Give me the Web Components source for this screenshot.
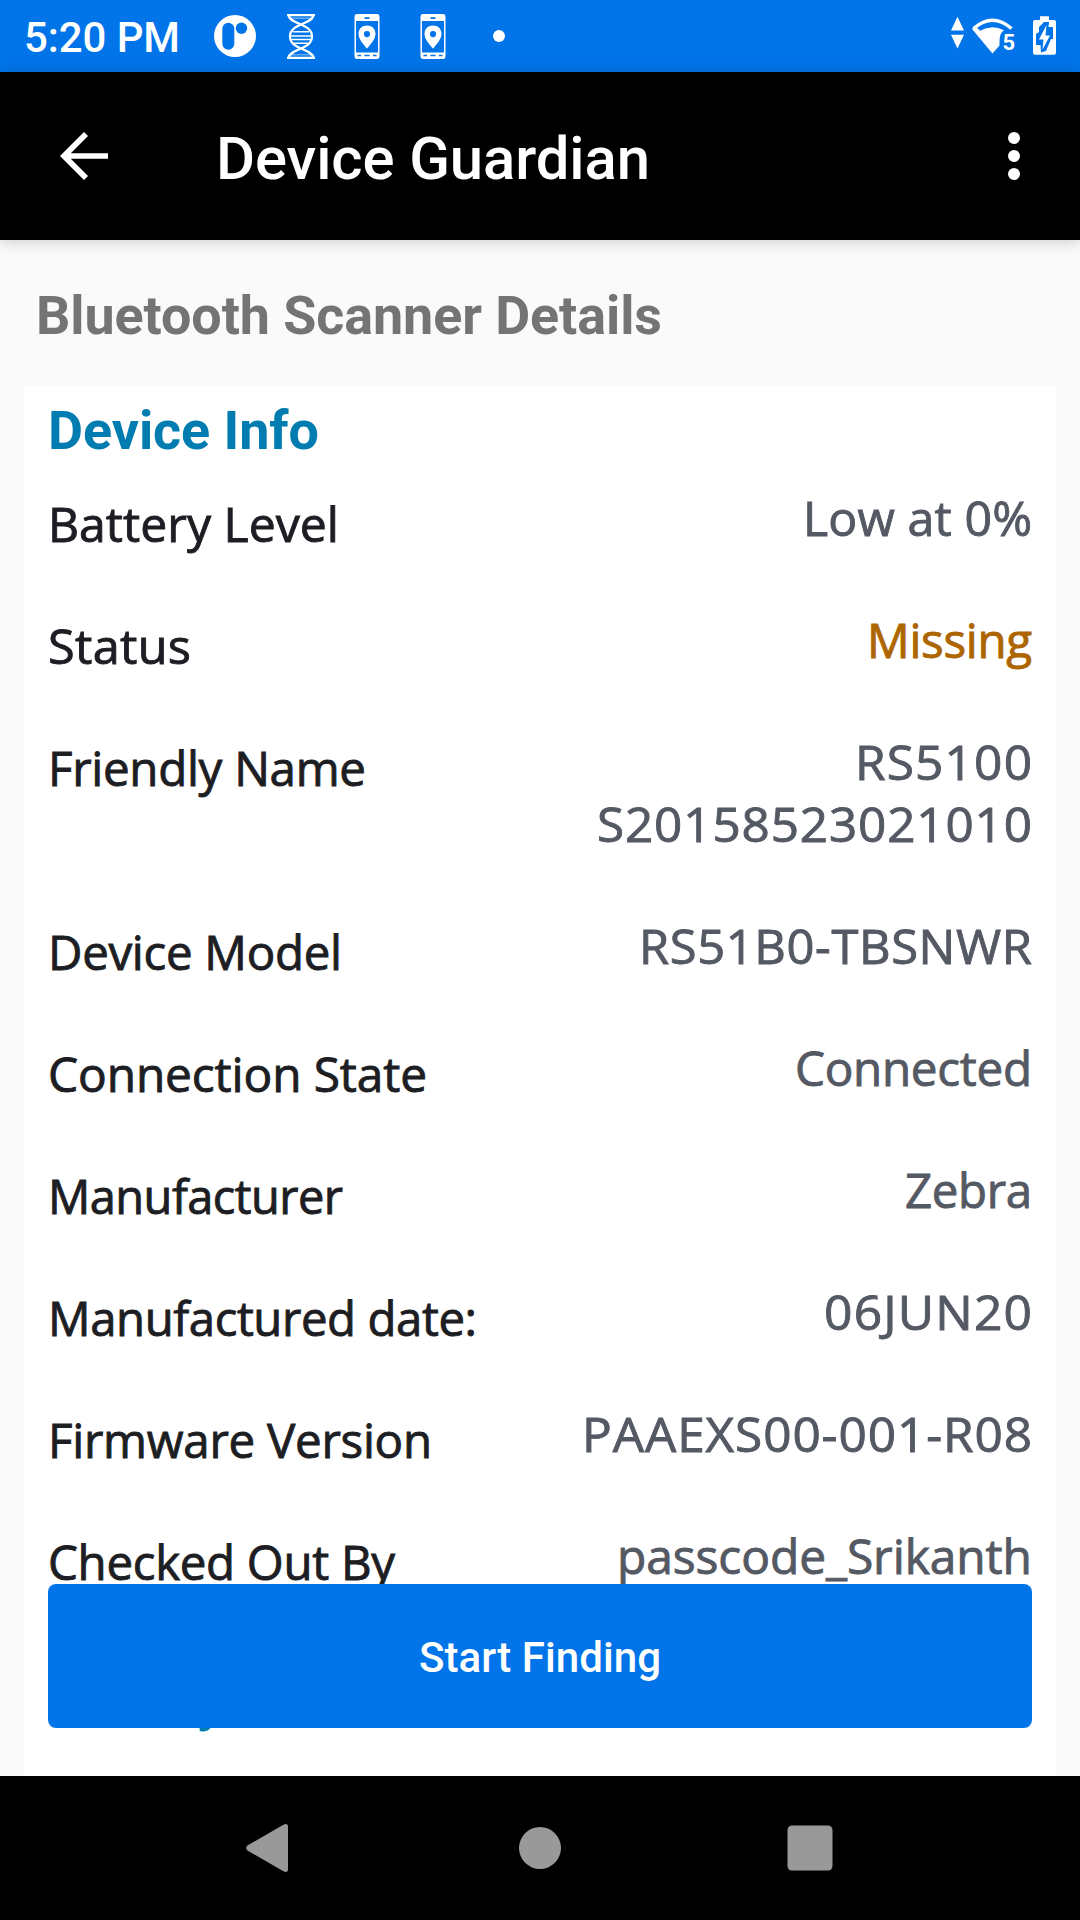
<!DOCTYPE html>
<html lang="en">
<head>
<meta charset="utf-8">
<title>Device Guardian</title>
<style>
html,body{margin:0;padding:0;width:1080px;height:1920px;overflow:hidden;background:#fafafa}
</style>
</head>
<body>
<guardian-screen></guardian-screen>
<script>
const define = (name, html, init) => customElements.define(name, class extends HTMLElement {
  constructor() {
    super();
    this.attachShadow({ mode: 'open' }).innerHTML = html;
  }
  connectedCallback() { if (init) init.call(this, this.shadowRoot); }
});

// Text run that takes exactly `w` pixels: part glyph stretch, part tracking.
define('fit-text', `<style>:host{display:block;flex:none;white-space:pre}span{display:inline-block;transform-origin:0 50%}</style><span></span>`, function (root) {
  const span = root.querySelector('span');
  const text = this.getAttribute('text');
  const w = +this.getAttribute('w');
  span.textContent = text;
  const own = span.getBoundingClientRect().width;
  const stretch = Math.sqrt(w / own);
  this.style.width = w + 'px';
  span.style.letterSpacing = (w / stretch - own) / (text.length - 1) + 'px';
  span.style.transform = `scaleX(${stretch})`;
});

define('phone-pin-icon', `<style>:host{display:block;width:26px;height:45px}svg{display:block}</style>
<svg width="26" height="45" viewBox="0 0 26 45"><path fill="#fff" fill-rule="evenodd" d="M3 0H23Q25.500 0 25.500 3V42Q25.500 45 23 45H3Q.500 45 .500 42V3Q.500 0 3 0ZM2 7V38.500H24V7ZM10.500 3.300V5H15.500V3.300ZM3.500 40.800V42.300H7V40.800ZM10.500 40.800V42.300H15.500V40.800ZM19 40.800V42.300H22.500V40.800Z"/><path fill="#fff" fill-rule="evenodd" d="M13 11.500C8 11.500 4.500 15 4.500 19.700C4.500 25.500 10 31 13 34.500C16 31 21.500 25.500 21.500 19.700C21.500 15 18 11.500 13 11.500ZM13 17A3.100 3.100 0 1 1 13 23.200A3.100 3.100 0 1 1 13 17Z"/></svg>`);

define('status-bar', `<style>
:host{display:flex;height:72px;background:#0074e8;color:#fff;align-items:center;padding:0 24px;font:500 42px/72px Roboto,sans-serif}
svg{display:block;flex:none}
fit-text{margin-top:3px}
.a{margin-left:34px}.b{margin-left:31px}.c{margin-left:39px}.d{margin-left:40px}.e{margin-left:47px}
.r{margin-left:auto;display:flex;align-items:center}
</style>
<fit-text text="5:20 PM" w="156"></fit-text>
<svg class="a" width="42" height="42" viewBox="0 0 42 42"><circle cx="21" cy="21" r="21" fill="#fff"/><rect x="8.300" y="7.700" width="12" height="27" rx="6" fill="#0074e8"/><circle cx="27.500" cy="13.300" r="5.700" fill="#0074e8"/></svg>
<svg class="b" width="28" height="45" viewBox="0 0 28 45" fill="none" stroke="#fff" stroke-width="2.200"><path d="M0 1.200H28M0 43.800H28M1.500 1C3 11 25 9 25 22.500S3 34 1.500 44M26.500 1C25 11 3 9 3 22.500S25 34 26.500 44"/><path stroke-width="1" stroke-opacity=".6" d="M3.500 4.200H24.500M4 40.800H24"/><path stroke-width="1.600" d="M6 17.800H22M4 22H24M4 25.500H24M6 29.300H22"/></svg>
<phone-pin-icon class="c"></phone-pin-icon><phone-pin-icon class="d"></phone-pin-icon>
<svg class="e" width="12" height="12"><circle cx="6" cy="6" r="6" fill="#fff"/></svg>
<div class="r">
<svg width="108" height="44" viewBox="948 14 108 44"><path fill="#fff" d="M957.500 16.800L964 30.500H951ZM951 34.700H964L957.500 48.500Z"/>
<path d="M973.500 28.500Q992.500 12 1011.500 28.500" fill="none" stroke="#fff" stroke-width="3.300"/>
<path fill="#fff" d="M972 29L975.500 26L980 30.800Q992 24 1004 30.300Q999.500 33 999.500 41V45.500L992.500 53.500Z"/>
<text x="1002.500" y="49.500" font-family="Roboto,sans-serif" font-size="22" font-weight="700" fill="#fff">5</text>
<path fill="#fff" d="M1040 16.200H1049V20H1054Q1056 20 1056 22V52.500Q1056 54.700 1054 54.700H1035Q1033 54.700 1033 52.500V22Q1033 20 1035 20H1040Z"/>
<path fill="#0074e8" d="M1044 22H1049L1048.500 27L1053 27V39H1051L1046 51L1041 52.500L1040.500 45H1036V34L1039 32V27Z"/><path fill="#fff" d="M1046.500 25L1039 39.500H1043.500L1042.500 49.500L1050 35.500H1045.500Z"/></svg>
</div>`);

define('app-bar', `<style>
:host{display:flex;position:relative;height:168px;box-sizing:border-box;background:#000;color:#fff;align-items:center;padding:0 60px;box-shadow:0 2px 14px rgba(0,0,0,.18);font:500 60px/72px Roboto,sans-serif}
svg{display:block;flex:none}fit-text{margin-left:108px;margin-top:6px}.more{margin-left:auto}
</style>
<svg width="48" height="48" viewBox="0 0 48 48" fill="none" stroke="#fff" stroke-width="5.700"><path d="M48 24H5M26 2L4 24L26 46"/></svg>
<fit-text text="Device Guardian" w="434"></fit-text>
<svg class="more" width="12" height="48" fill="#fff"><circle cx="6" cy="6" r="6"/><circle cx="6" cy="24" r="6"/><circle cx="6" cy="42" r="6"/></svg>`);

define('section-title', `<style>:host{display:block;font:700 54px/64px Roboto,sans-serif}</style><slot></slot>`);

define('info-row', `<style>
:host{display:flex;justify-content:space-between;padding-bottom:60px;font:400 48px/62px "Open Sans","Noto Sans",sans-serif;-webkit-text-stroke:.9px currentColor}
.l{padding-top:6px;height:56px;color:#1d1e23}.v{display:flex;flex-direction:column;align-items:flex-end;color:#545963}
:host([tone=warn]) .v{color:#ad6500}
</style><div class="l"></div><div class="v"></div>`, function (root) {
  const make = s => { const [t, w] = s.split('|'); const f = document.createElement('fit-text'); f.setAttribute('text', t); f.setAttribute('w', w); return f; };
  root.querySelector('.l').append(make(this.getAttribute('label')));
  this.getAttribute('value').split(';').forEach(s => root.querySelector('.v').append(make(s)));
});

define('action-button', `<style>:host{display:flex;justify-content:center;align-items:center;height:144px;box-sizing:border-box;padding-top:3px;border-radius:8px;background:#0074e8;color:#fff;font:500 42px/50px Roboto,sans-serif}</style><fit-text text="Start Finding" w="242"></fit-text>`);

define('nav-bar', `<style>:host{display:flex;height:144px;background:#000;align-items:center;padding-left:246px}svg{display:block}.h{margin:0 226px 0 231px}</style>
<svg width="42" height="48"><path fill="#999" d="M1.500 21.500L37 1Q42 -1.500 42 3V45Q42 49.500 37 47L1.500 26.500Q-1 24 1.500 21.500Z"/></svg>
<svg class="h" width="42" height="42"><circle cx="21" cy="21" r="21" fill="#999"/></svg>
<svg width="46" height="46"><rect x=".500" y=".500" width="45" height="45" rx="4.500" fill="#999"/></svg>`);

define('guardian-screen', `<style>
:host{display:flex;flex-direction:column;width:1080px;height:1920px;background:#fafafa}
main{flex:1;min-height:0;display:flex;flex-direction:column;position:relative;overflow:hidden;padding:0 24px}
app-bar{z-index:1}
.head{padding:44px 12px 0;color:#747474;height:101px}
.card{background:#fff;flex:1;min-height:0;padding:14px 24px 0}
.card section-title{color:#007cb0}
.rows{padding-top:24px}
.history{margin-top:23px}
action-button{position:absolute;left:48px;right:48px;bottom:48px}
</style>
<status-bar></status-bar><app-bar></app-bar>
<main>
<section-title class="head"><fit-text text="Bluetooth Scanner Details" w="626"></fit-text></section-title>
<div class="card">
<section-title><fit-text text="Device Info" w="271"></fit-text></section-title>
<div class="rows">
<info-row label="Battery Level|291" value="Low at 0%|229"></info-row>
<info-row label="Status|143" value="Missing|165" tone="warn"></info-row>
<info-row label="Friendly Name|318" value="RS5100|177;S20158523021010|435"></info-row>
<info-row label="Device Model|294" value="RS51B0-TBSNWR|393"></info-row>
<info-row label="Connection State|379" value="Connected|237"></info-row>
<info-row label="Manufacturer|295" value="Zebra|127"></info-row>
<info-row label="Manufactured date:|429" value="06JUN20|208"></info-row>
<info-row label="Firmware Version|384" value="PAAEXS00-001-R08|450"></info-row>
<info-row label="Checked Out By|347" value="passcode_Srikanth|415"></info-row>
</div>
<section-title class="history">History</section-title>
</div>
<action-button></action-button>
</main>
<nav-bar></nav-bar>`);
</script>
</body>
</html>
